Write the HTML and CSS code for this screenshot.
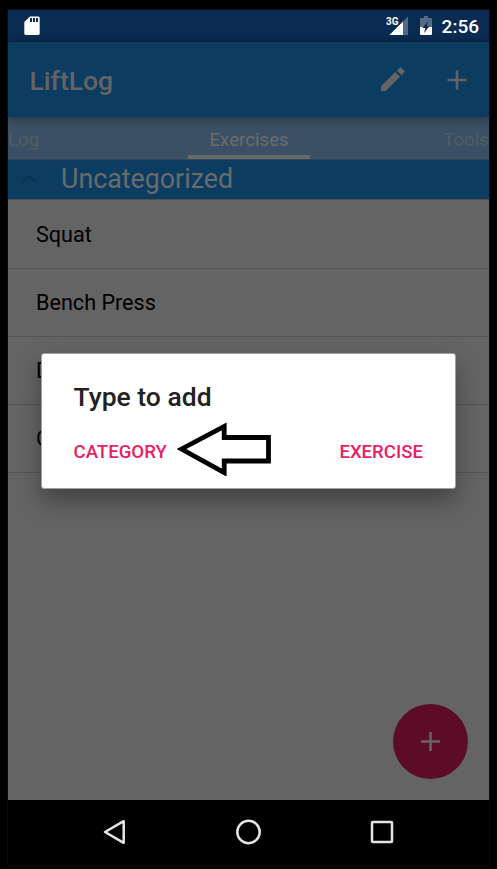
FILE: index.html
```html
<!DOCTYPE html>
<html lang="en">
<head>
<meta charset="utf-8">
<title>LiftLog</title>
<link rel="stylesheet" href="styles.css">
</head>
<body>
<div class="phone">
  <header class="status">
    <svg class="sd" width="16" height="20" viewBox="0 0 16 20"><path fill="#fff" d="M6 0.5H14.3Q15.7 .5 15.7 2V17.6Q15.7 19 14.3 19H1.7Q.3 19 .3 17.6V6Z"/><path fill="#0a2c52" d="M6 2h2v4H6zM9 2h2v4H9zM12 2h2v4h-2z"/></svg>
    <span class="network">3G</span>
    <svg class="signal" width="20" height="20" viewBox="0 0 20 20"><path fill="#546b86" d="M19 .5V19H.5Z"/><path fill="#fff" d="M14 5.5V19H.5Z"/></svg>
    <svg class="battery" width="12" height="20" viewBox="0 0 12 20"><path fill="#546b86" d="M4 0h4v2h3q1 0 1 1v8H0V3q0-1 1-1h3z"/><path fill="#fff" d="M0 11h12v7q0 1-1 1H1q-1 0-1-1z"/><path fill="#0a2c52" d="M8 5 2.5 12H5.3L4 17l5.5-7H6.8Z"/></svg>
    <span class="clock">2:56</span>
  </header>
  <div class="toolbar">
    <h1 class="app-title">LiftLog</h1>
    <svg class="pencil" width="26" height="26" viewBox="0 0 26 26" fill="#646464"><path d="M1 20.2V25H5.8L20 10.8 15.2 6ZM24.3 6.5Q25.2 5.6 24.3 4.7L21.3 1.7Q20.4.8 19.5 1.7L16.8 4.4 21.6 9.2Z"/></svg>
    <svg class="plus" width="20" height="20" viewBox="0 0 20 20" fill="#646464"><path d="M8.7.5h2.6v8.2h8.2v2.6h-8.2v8.2H8.7v-8.2H.5V8.7h8.2z"/></svg>
  </div>
  <nav class="tabs">
    <span class="tab tab-log">Log</span>
    <span class="tab tab-active">Exercises</span>
    <span class="tab tab-tools">Tools</span>
  </nav>
  <main class="content">
    <div class="group">
      <svg class="chevron" width="16" height="10" viewBox="0 0 16 10"><path fill="none" stroke="#0c314f" stroke-width="2" d="M1 8.5 8 1.8 15 8.5"/></svg>
      <span>Uncategorized</span>
    </div>
    <div class="row">Squat</div>
    <div class="row">Bench Press</div>
    <div class="row">D</div>
    <div class="row">O</div>
    <div class="fab"><svg width="20" height="20" viewBox="0 0 20 20" fill="#646464"><path d="M8.2 0h2.6v8.2h8.2v2.6h-8.2v8.2H8.2v-8.2H0V8.2h8.2z"/></svg></div>
  </main>
  <footer class="nav">
    <svg width="26" height="28" viewBox="0 0 26 28"><path d="M21.7 3.2V24.8L3 14Z"/></svg>
    <svg width="28" height="28" viewBox="0 0 28 28"><circle cx="14.5" cy="14" r="11.2"/></svg>
    <svg width="28" height="28" viewBox="0 0 28 28"><rect x="4" y="4" width="20" height="20" rx=".7"/></svg>
  </footer>
  <section class="dialog">
    <h2 class="dialog-title">Type to add</h2>
    <div class="actions">
      <span>CATEGORY</span>
      <svg class="arrow" width="94" height="54" viewBox="0 0 94 54"><path fill="#fff" stroke="#000" stroke-width="4.8" d="M4.5 27 47.2 4.4V15.5H91.5V39H47.2V50.6Z"/></svg>
      <span>EXERCISE</span>
    </div>
  </section>
</div>
</body>
</html>
```
FILE: styles.css
```css
* { box-sizing: border-box; }
body {
  margin: 0;
  padding: 10px 8px 0;
  width: 497px;
  height: 869px;
  overflow: hidden;
  background: #000;
  font-family: Roboto, sans-serif;
}
svg { display: block; flex: none; }
.phone {
  position: relative;
  width: 481px;
  height: 855px;
  overflow: hidden;
  display: flex;
  flex-direction: column;
  box-shadow: 0 0 0 1px #0b0b0b;
}
.status {
  height: 32px;
  background: #0a2c52;
  color: #fff;
  display: flex;
  align-items: center;
  padding: 0 10px 0 16px;
}
.network {
  margin-left: auto;
  align-self: flex-start;
  padding-top: 5px;
  font-size: 11.5px;
  line-height: 13px;
  font-weight: 700;
  transform: scaleX(.86);
}
.signal { margin-left: -11px; }
.battery { margin: 0 10px 0 11px; }
.clock { font-size: 19px; font-weight: 500; line-height: 32px; padding-top: 2px; }
.toolbar {
  height: 75px;
  flex: none;
  background: #0d3c61;
  display: flex;
  align-items: center;
  padding: 0 22px 0 21.5px;
  position: relative;
  box-shadow: 0 1px 10px rgba(0, 0, 0, .4);
}
.app-title {
  margin: 1px auto 0 0;
  color: #646464;
  font-size: 26.5px;
  font-weight: 500;
}
.pencil { margin: 0 41px 1px 0; }
.tabs {
  height: 43px;
  flex: none;
  background: #3b5064;
  border-bottom: 1px solid #2b4962;
  display: flex;
  justify-content: space-between;
  color: #525c65;
  font-size: 18.7px;
  line-height: 46px;
}
.tab-active {
  width: 122px;
  height: 42px;
  text-align: center;
  color: #6b6c6d;
  border-bottom: 4px solid #6a6867;
  margin-left: 8px;
}
.tab-log { width: 39px; }
.content {
  position: relative;
  height: 640px;
  flex: none;
  background: #646464;
}
.group {
  height: 39px;
  background: #0d3c61;
  color: #696b6d;
  display: flex;
  align-items: center;
  padding: 0 0 1px 13px;
  font-size: 26.8px;
  line-height: 38px;
}
.chevron { margin-right: 24px; }
.row {
  height: 68px;
  border-bottom: 1px solid #555;
  padding-left: 28px;
  color: #000;
  font-size: 21.6px;
  line-height: 68px;
}
.group + .row { height: 70px; border-top: 1px solid #515151; line-height: 69px; }
.fab {
  position: absolute;
  right: 21px;
  bottom: 21px;
  width: 75px;
  height: 75px;
  border-radius: 50%;
  background: #5c0c26;
  display: grid;
  place-items: center;
}
.nav {
  height: 66px;
  flex: none;
  background: #000;
  display: flex;
  justify-content: space-between;
  align-items: center;
  padding: 0 93px 2px 94px;
}
.nav svg {
  fill: none;
  stroke: #e5e5e5;
  stroke-width: 2.5;
  stroke-linejoin: round;
}
.dialog {
  position: absolute;
  left: 33px;
  top: 343px;
  width: 415px;
  height: 136px;
  padding: 27px 32px 0 31.5px;
  background: #fff;
  border: 1px solid #a0a0a0;
  border-radius: 3px;
  box-shadow: 0 12px 24px rgba(0, 0, 0, .34);
}
.dialog-title {
  margin: 0;
  color: #212121;
  font-size: 26.5px;
  line-height: 31px;
  font-weight: 500;
}
.actions {
  margin-top: 13px;
  display: flex;
  align-items: center;
  height: 54px;
  color: #e91e63;
  font-size: 18.6px;
  font-weight: 500;
}
.arrow { margin: -6px auto 0 10.5px; }
```
